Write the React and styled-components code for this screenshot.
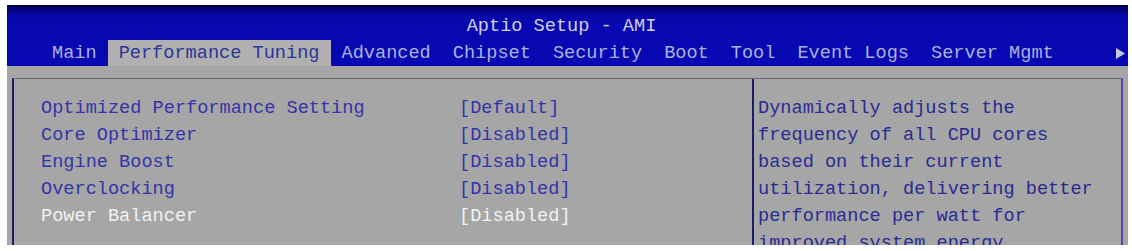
import React from "react";
import styled, { createGlobalStyle } from "styled-components";

const GlobalStyle = createGlobalStyle`
  html, body {
    margin: 0;
    background: #ffffff;
    overflow: hidden;
  }
`;

const tabs = [
  "Main",
  "Performance Tuning",
  "Advanced",
  "Chipset",
  "Security",
  "Boot",
  "Tool",
  "Event Logs",
  "Server Mgmt",
];

const settings = [
  { label: "Optimized Performance Setting", value: "[Default]" },
  { label: "Core Optimizer", value: "[Disabled]" },
  { label: "Engine Boost", value: "[Disabled]" },
  { label: "Overclocking", value: "[Disabled]" },
  { label: "Power Balancer", value: "[Disabled]", selected: true },
];

const helpLines = [
  "Dynamically adjusts the",
  "frequency of all CPU cores",
  "based on their current",
  "utilization, delivering better",
  "performance per watt for",
  "improved system energy",
];

const App = () => {
  return (
    <>
      <GlobalStyle />
      <Screen>
        <Header>
          <Title>Aptio Setup - AMI</Title>
          <TabBar>
            {tabs.map((tab) => (
              <Tab key={tab} active={tab === "Performance Tuning"}>
                {tab}
              </Tab>
            ))}
            <MoreArrow width="9" height="11" viewBox="0 0 9 11">
              <path d="M0 0 L9 5.5 L0 11 Z" fill="#c4c8e0" />
            </MoreArrow>
          </TabBar>
        </Header>
        <Panel>
          <SettingsList>
            {settings.map((s) => (
              <SettingRow key={s.label} selected={s.selected}>
                <span>{s.label}</span>
                <span>{s.value}</span>
              </SettingRow>
            ))}
          </SettingsList>
          <Help>
            {helpLines.map((line) => (
              <HelpLine key={line}>{line}</HelpLine>
            ))}
          </Help>
        </Panel>
      </Screen>
    </>
  );
};

const Screen = styled.div`
  width: 1121px;
  height: 240px;
  margin: 5px 0 0 7px;
  background: #a6a6a6;
  overflow: hidden;
  font-family: "Liberation Mono", "DejaVu Sans Mono", monospace;
  font-size: 18.6px;
`;

const Header = styled.div`
  height: 61px;
  background: linear-gradient(to bottom, #02024a 0px, #0606a6 9px, #0808b2 20px, #0808b4 100%);
  display: flex;
  flex-direction: column;
`;

const Title = styled.div`
  padding: 11px 12px 2px 0;
  line-height: 22px;
  text-align: center;
  color: #cfd0e0;
`;

const TabBar = styled.div`
  display: flex;
  align-items: stretch;
  height: 26px;
  margin-top: auto;
  padding-left: 34px;
  padding-right: 3px;
`;

const Tab = styled.div`
  padding: 2px 11px 0;
  line-height: 24px;
  white-space: pre;
  color: ${(p) => (p.active ? "#2a3696" : "#aab2dc")};
  background: ${(p) => (p.active ? "#b0b0b0" : "transparent")};
`;

const MoreArrow = styled.svg`
  margin-left: auto;
  align-self: center;
  margin-top: 1px;
`;

const Panel = styled.div`
  margin: 12px 5px 0 5px;
  height: 200px;
  border-top: 1px solid #6a6a78;
  border-left: 2px solid #1c1c6c;
  border-right: 2px solid #4a48a8;
  display: grid;
  grid-template-columns: 738px 1fr;
`;

const SettingsList = styled.div`
  padding: 16px 0 0 27px;
`;

const SettingRow = styled.div`
  display: grid;
  grid-template-columns: 418px 1fr;
  line-height: 27px;
  white-space: pre;
  color: ${(p) => (p.selected ? "#f2f2f2" : "#3434a8")};
`;

const Help = styled.div`
  border-left: 2px solid #1c1c6c;
  padding: 16px 0 0 4px;
`;

const HelpLine = styled.div`
  line-height: 27px;
  white-space: pre;
  color: #2a2a92;
`;

export default App;
